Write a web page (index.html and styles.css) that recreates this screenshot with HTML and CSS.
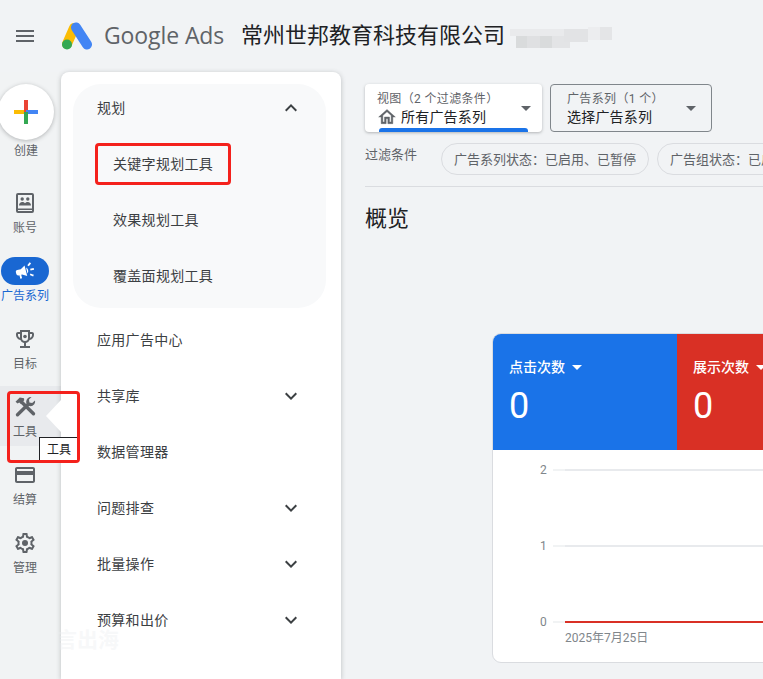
FILE: index.html
```html
<!DOCTYPE html>
<html lang="zh">
<head>
<meta charset="utf-8">
<title>Google Ads</title>
<link rel="stylesheet" href="styles.css">
</head>
<body>
<div class="app">
  <header class="topbar">
    <svg class="menu-icon" viewBox="0 0 24 24"><path d="M3 18h18v-2H3v2zm0-5h18v-2H3v2zm0-7v2h18V6H3z"/></svg>
    <svg class="logo" viewBox="0 0 32 28">
      <line x1="13" y1="6" x2="6" y2="22" stroke="#fbbc04" stroke-width="10" stroke-linecap="round"/>
      <line x1="15" y1="5.500" x2="26" y2="22.500" stroke="#4285f4" stroke-width="10" stroke-linecap="round"/>
      <circle cx="6" cy="22.500" r="5" fill="#34a853"/>
    </svg>
    <span class="brand">Google Ads</span>
    <span class="company">常州世邦教育科技有限公司</span>
    <span class="blur-patch"><i class="b1"></i><i class="b2"></i><i class="b3"></i><i class="b4"></i><i class="b5"></i><i class="b6"></i><i class="b7"></i><i class="b8"></i></span>
  </header>
  <div class="body">
    <aside class="rail">
      <div class="create">
        <div class="fab">
          <svg viewBox="0 0 24 24" class="plus">
            <rect x="0" y="10" width="12" height="4" fill="#fbbc04"/>
            <rect x="10" y="0" width="4" height="12" fill="#ea4335"/>
            <rect x="12" y="10" width="12" height="4" fill="#4285f4"/>
            <rect x="10" y="12" width="4" height="12" fill="#34a853"/>
          </svg>
        </div>
        <span class="rail-label">创建</span>
      </div>
      <div class="rail-item">
        <svg class="rail-icon" viewBox="0 0 24 24"><path fill-rule="evenodd" d="M5 2h14a2 2 0 0 1 2 2v16a2 2 0 0 1-2 2H5a2 2 0 0 1-2-2V4a2 2 0 0 1 2-2zm0 2v13.500h14V4H5zm0 15v1h14v-1H5z"/><circle cx="9.200" cy="8" r="1.700"/><circle cx="14.800" cy="8" r="1.700"/><path d="M6 14.500c0-2.300 1.500-3.500 3.200-3.500 1.200 0 2.100.5 2.800 1.200.7-.7 1.600-1.200 2.800-1.200 1.700 0 3.200 1.200 3.200 3.500H6z"/></svg>
        <span class="rail-label">账号</span>
      </div>
      <div class="rail-item active">
        <div class="pill">
          <svg viewBox="0 0 24 24"><path d="M18 11v2h4v-2h-4zm-2 6.610c.96.710 2.210 1.650 3.200 2.390.4-.53.8-1.070 1.200-1.600-.99-.74-2.240-1.680-3.200-2.400-.4.54-.8 1.080-1.200 1.610zM20.400 5.600c-.4-.53-.8-1.070-1.200-1.600-.99.74-2.240 1.680-3.200 2.400.4.53.8 1.070 1.200 1.600.96-.72 2.210-1.650 3.200-2.400zM4 9c-1.100 0-2 .9-2 2v2c0 1.100.9 2 2 2h1v4h2v-4h1l5 3V6L8 9H4zm11.500 3c0-1.330-.58-2.530-1.500-3.350v6.690c.92-.81 1.500-2.010 1.500-3.340z"/></svg>
        </div>
        <span class="rail-label">广告系列</span>
      </div>
      <div class="rail-item">
        <svg class="rail-icon" viewBox="0 0 24 24"><path fill-rule="evenodd" d="M19 5h-2V3H7v2H5c-1.100 0-2 .9-2 2v1c0 2.550 1.920 4.630 4.390 4.940.63 1.500 1.980 2.630 3.610 2.960V19H7v2h10v-2h-4v-3.100c1.630-.33 2.980-1.460 3.610-2.960C19.080 12.630 21 10.550 21 8V7c0-1.100-.9-2-2-2zM5 8V7h2v3.820C5.840 10.400 5 9.300 5 8zm14 0c0 1.300-.84 2.400-2 2.820V7h2v1zM9 5h6v6a3 3 0 0 1-6 0V5z"/><circle cx="12" cy="9.500" r="1.800"/></svg>
        <span class="rail-label">目标</span>
      </div>
      <div class="rail-item hovered">
        <svg class="rail-icon" viewBox="0 0 24 24"><path d="M2.500 6.800L6.800 2.600l4.200.6.2 2-3.200 3.800-1.800-1.600-1.600 1.200z"/><line class="tool-line" x1="8.800" y1="7.200" x2="20.500" y2="18.800"/><path d="M18.500 2L16 4.600l.4 2.800 2.800.6L22 5.600c.6 3-1.600 5.600-4.400 5.600-2.600 0-4.600-2.200-4.400-4.600.2-2.800 2.800-5 5.300-4.600z"/><line class="tool-line" x1="4.500" y1="19.800" x2="15" y2="9.500"/></svg>
        <span class="rail-label">工具</span>
      </div>
      <div class="rail-item">
        <svg class="rail-icon" viewBox="0 0 24 24"><path d="M20 4H4c-1.110 0-1.990.89-1.990 2L2 18c0 1.110.89 2 2 2h16c1.110 0 2-.89 2-2V6c0-1.110-.89-2-2-2zm0 14H4v-6h16v6zm0-10H4V6h16v2z"/></svg>
        <span class="rail-label">结算</span>
      </div>
      <div class="rail-item">
        <svg class="rail-icon" viewBox="0 0 24 24"><path d="M19.430 12.980c.04-.32.070-.64.070-.98 0-.34-.03-.66-.07-.98l2.110-1.650c.19-.15.240-.42.120-.64l-2-3.460c-.09-.16-.26-.25-.44-.25-.06 0-.12.010-.17.030l-2.490 1c-.52-.4-1.080-.73-1.690-.98l-.38-2.650C14.460 2.180 14.250 2 14 2h-4c-.25 0-.46.180-.49.420l-.38 2.650c-.61.250-1.170.590-1.690.980l-2.490-1c-.06-.02-.12-.03-.18-.03-.17 0-.34.090-.43.250l-2 3.460c-.13.220-.07.490.12.640l2.110 1.650c-.04.320-.07.650-.07.980 0 .33.030.66.070.98l-2.110 1.650c-.19.150-.24.420-.12.640l2 3.460c.09.160.26.250.44.250.06 0 .12-.01.17-.03l2.490-1c.52.4 1.080.73 1.690.98l.38 2.650c.03.240.24.420.49.420h4c.25 0 .46-.18.49-.42l.38-2.650c.61-.25 1.170-.59 1.690-.98l2.490 1c.06.02.12.03.18.03.17 0 .34-.09.43-.25l2-3.460c.12-.22.07-.49-.12-.64l-2.110-1.650zm-1.980-1.710c.04.310.05.520.05.730 0 .210-.02.430-.05.730l-.14 1.130.89.7 1.080.84-.7 1.210-1.270-.51-1.040-.42-.9.680c-.43.320-.84.560-1.250.730l-1.060.43-.16 1.130-.2 1.350h-1.400l-.19-1.350-.16-1.130-1.060-.43c-.43-.18-.83-.41-1.230-.71l-.91-.7-1.060.43-1.270.51-.7-1.210 1.080-.84.89-.7-.14-1.130c-.03-.31-.05-.54-.05-.74s.02-.43.050-.73l.14-1.130-.89-.7-1.080-.84.7-1.210 1.270.51 1.040.42.9-.68c.43-.32.84-.56 1.250-.73l1.060-.43.16-1.130.2-1.350h1.390l.19 1.350.16 1.130 1.060.43c.43.180.83.410 1.230.710l.91.7 1.060-.43 1.270-.51.7 1.210-1.070.85-.89.7.14 1.130z"/><circle cx="12" cy="12" r="3"/></svg>
        <span class="rail-label">管理</span>
      </div>
    </aside>

    <nav class="panel">
      <div class="group">
        <div class="nav-row"><span>规划</span><svg class="chev" viewBox="0 0 24 24"><path d="M12 8l-6 6 1.410 1.410L12 10.830l4.590 4.580L18 14z"/></svg></div>
        <div class="nav-row sub"><span>关键字规划工具</span></div>
        <div class="nav-row sub"><span>效果规划工具</span></div>
        <div class="nav-row sub"><span>覆盖面规划工具</span></div>
      </div>
      <div class="nav-list">
        <div class="nav-row tall"><span>应用广告中心</span></div>
        <div class="nav-row tall"><span>共享库</span><svg class="chev" viewBox="0 0 24 24"><path d="M16.590 8.590L12 13.170 7.410 8.590 6 10l6 6 6-6z"/></svg></div>
        <div class="nav-row tall"><span>数据管理器</span></div>
        <div class="nav-row tall"><span>问题排查</span><svg class="chev" viewBox="0 0 24 24"><path d="M16.590 8.590L12 13.170 7.410 8.590 6 10l6 6 6-6z"/></svg></div>
        <div class="nav-row tall"><span>批量操作</span><svg class="chev" viewBox="0 0 24 24"><path d="M16.590 8.590L12 13.170 7.410 8.590 6 10l6 6 6-6z"/></svg></div>
        <div class="nav-row tall"><span>预算和出价</span><svg class="chev" viewBox="0 0 24 24"><path d="M16.590 8.590L12 13.170 7.410 8.590 6 10l6 6 6-6z"/></svg></div>
      </div>
    </nav>

    <main class="main">
      <div class="selectors">
        <div class="selector view">
          <div class="sel-text">
            <span class="sel-label">视图（2 个过滤条件）</span>
            <span class="sel-value"><svg class="home" viewBox="0 0 24 24"><path d="M12 5.690l5 4.500V18h-2v-6H9v6H7v-7.810l5-4.500M12 3L2 12h3v8h6v-6h2v6h6v-8h3L12 3z"/></svg>所有广告系列</span>
          </div>
          <i class="caret"></i>
          <i class="sel-bar"></i>
        </div>
        <div class="selector campaign">
          <div class="sel-text">
            <span class="sel-label">广告系列（1 个）</span>
            <span class="sel-value">选择广告系列</span>
          </div>
          <i class="caret"></i>
        </div>
      </div>
      <div class="filters">
        <span class="filter-title">过滤条件</span>
        <span class="chip">广告系列状态：已启用、已暂停</span>
        <span class="chip">广告组状态：已启用、已暂停</span>
      </div>
      <div class="divider"></div>
      <h1 class="title">概览</h1>
      <section class="card">
        <div class="tiles">
          <div class="tile blue"><div class="tile-label">点击次数<i class="caret white"></i></div><div class="tile-num">0</div></div>
          <div class="tile red"><div class="tile-label">展示次数<i class="caret white"></i></div><div class="tile-num">0</div></div>
        </div>
        <div class="chart">
          <div class="chart-row"><span class="y">2</span><i class="tick"></i><i class="grid"></i></div>
          <div class="chart-row"><span class="y">1</span><i class="tick"></i><i class="grid"></i></div>
          <div class="chart-row"><span class="y">0</span><i class="tick"></i><i class="grid zero"></i></div>
          <div class="date">2025年7月25日</div>
        </div>
      </section>
    </main>
  </div>

  <div class="mark mark-keyword"></div>
  <div class="mark mark-tools"></div>
  <div class="arrow"></div>
  <div class="tooltip">工具</div>
  <div class="watermark">言出海</div>
</div>
</body>
</html>
```
FILE: styles.css
```css
* { box-sizing: border-box; }
html, body { margin: 0; height: 100%; }
body {
  font-family: Roboto, "Noto Sans CJK SC", sans-serif;
  background: #f1f3f4;
  color: #3c4043;
  overflow: hidden;
}
.app { position: relative; width: 763px; height: 679px; overflow: hidden; background: #f1f3f5; }

/* header */
.topbar { height: 72px; display: flex; align-items: center; }
.menu-icon { width: 24px; height: 24px; margin-left: 13px; fill: #5f6368; flex: none; }
.logo { width: 32px; height: 28px; margin-left: 24px; flex: none; }
.brand { margin: 0 0 2px 11px; width: 137px; font-family: "Open Sans", Roboto, sans-serif; font-size: 23px; letter-spacing: -.1px; color: #5f6368; flex: none; white-space: nowrap; }
.company { font-size: 22px; line-height: 28px; color: #202124; white-space: nowrap; flex: none; }

/* mosaic covering a blurred part of the account name */
.blur-patch { position: relative; display: block; width: 0; height: 0; align-self: flex-start; }
.blur-patch i { position: absolute; display: block; }
.b1 { left: 5px; top: 29px; width: 55px; height: 7px; background: #e9eaec; }
.b2 { left: 11px; top: 36px; width: 11px; height: 12px; background: #d9dbdc; }
.b3 { left: 22px; top: 36px; width: 13px; height: 12px; background: #dfe0e2; }
.b4 { left: 35px; top: 36px; width: 12px; height: 12px; background: #d9dbdc; }
.b5 { left: 47px; top: 36px; width: 18px; height: 12px; background: #e3e4e6; }
.b6 { left: 59px; top: 29px; width: 24px; height: 13px; background: #e2e3e5; }
.b7 { left: 83px; top: 27px; width: 12px; height: 13px; background: #ecedef; }
.b8 { left: 95px; top: 27px; width: 12px; height: 13px; background: #e4e5e7; }

.body { display: flex; height: 607px; }

/* rail */
.rail { width: 61px; flex: none; padding-top: 12px; display: flex; flex-direction: column; gap: 8px; background: #f1f3f4; }
.create { height: 90px; display: flex; flex-direction: column; }
.fab { width: 56px; height: 56px; margin-left: -2px; border-radius: 50%; background: #fff; box-shadow: 0 1px 4px rgba(60,64,67,.35); display: flex; align-items: center; justify-content: center; flex: none; }
.plus { width: 24px; height: 24px; }
.create .rail-label { margin-top: 3px; width: 52px; }
.rail-item { height: 60px; padding: 9px 11px 0 0; display: flex; flex-direction: column; align-items: center; gap: 5px; }
.rail-item.hovered { background: #e8eaed; }
.rail-icon { width: 24px; height: 24px; fill: #5f6368; flex: none; }
.tool-line { stroke: #5f6368; stroke-width: 3.4; stroke-linecap: round; }
.rail-label { display: block; font-size: 12px; line-height: 16px; color: #5f6368; text-align: center; white-space: nowrap; }
.pill { width: 48px; height: 28px; margin: -2px 0; border-radius: 14px; background: #1967d2; display: flex; align-items: center; justify-content: center; flex: none; }
.pill svg { width: 22px; height: 22px; fill: #fff; transform: rotate(-14deg); }
.active .rail-label { color: #1967d2; }

/* panel */
.panel { width: 280px; flex: none; background: #fff; border-radius: 8px 8px 0 0; box-shadow: 0 1px 5px rgba(60,64,67,.3); padding: 12px 15px 0 12px; position: relative; }
.group { background: #f8f9fa; border-radius: 28px; padding-bottom: 4px; }
.nav-row { display: flex; align-items: center; justify-content: space-between; height: 48px; margin-bottom: 4px; padding: 0 23px 0 24px; font-size: 14px; letter-spacing: .3px; color: #3c4043; }
.nav-row span { margin-bottom: 2px; }
.nav-row.sub { height: 56px; margin: 0; padding-left: 40px; }
.nav-list { padding-top: 4px; }
.nav-row.tall { height: 56px; margin: 0; }
.chev { width: 24px; height: 24px; fill: #3c4043; flex: none; }

/* main */
.main { flex: 1; min-width: 0; padding: 12px 0 0 24px; overflow: hidden; }
.selectors { display: flex; gap: 8px; }
.selector { position: relative; height: 48px; border-radius: 4px; display: flex; align-items: center; justify-content: space-between; flex: none; }
.selector.view { width: 177px; background: #fff; box-shadow: 0 1px 3px rgba(60,64,67,.35); padding: 0 11px 0 12px; }
.selector.campaign { width: 162px; border: 1px solid #80868b; padding: 0 15px 0 16px; }
.sel-text { display: flex; flex-direction: column; padding-top: 2px; }
.sel-label { font-size: 12px; line-height: 16px; letter-spacing: .35px; color: #5f6368; white-space: nowrap; }
.sel-value { display: flex; align-items: center; font-size: 14px; line-height: 20px; letter-spacing: .2px; color: #202124; white-space: nowrap; }
.home { width: 20px; height: 20px; fill: #5f6368; stroke: #5f6368; stroke-width: .5; margin: 0 4px 0 0; }
.caret { display: inline-block; width: 0; height: 0; border-left: 5px solid transparent; border-right: 5px solid transparent; border-top: 5px solid #5f6368; flex: none; }
.caret.white { border-top-color: #fff; margin-left: 7px; vertical-align: 2px; }
.sel-bar { position: absolute; left: 14px; bottom: 0; width: 149px; height: 4px; background: #1a73e8; border-radius: 3px 3px 0 0; }

.filters { display: flex; align-items: flex-start; margin-top: 11px; white-space: nowrap; }
.filter-title { width: 76px; flex: none; font-size: 13px; line-height: 24px; color: #5f6368; }
.chip { flex: none; height: 32px; margin-right: 8px; padding: 0 12px; border: 1px solid #dadce0; border-radius: 16px; font-size: 13px; line-height: 32px; color: #5f6368; }
.divider { height: 1px; margin-top: 11px; background: #dadce0; }
.title { margin: 18px 0 0; font-size: 22px; line-height: 28px; font-weight: 400; color: #202124; }

.card { width: 400px; height: 330px; margin: 100px 0 0 127px; background: #fff; border: 1px solid #dadce0; border-radius: 9px; overflow: hidden; }
.tiles { display: flex; height: 116px; }
.tile { width: 184px; flex: none; padding: 23px 16px 0; color: #fff; }
.tile.blue { background: #1a73e8; }
.tile.red { background: #d93025; }
.tile-label { font-size: 14px; line-height: 20px; font-weight: 500; white-space: nowrap; }
.tile-num { margin-top: 5px; font-size: 36px; line-height: 48px; }
.chart { padding-top: 12px; }
.chart-row { display: flex; align-items: center; height: 16px; margin-bottom: 60px; }
.chart-row:nth-child(3) { margin-bottom: 0; }
.y { width: 54px; padding-left: 47px; flex: none; font-size: 12px; color: #80868b; }
.tick { width: 12px; height: 2px; margin-left: 6px; background: #f1f3f4; flex: none; }
.grid { flex: 1; height: 2px; background: #e8eaed; }
.grid.zero { background: #d93025; }
.date { padding-left: 72px; font-size: 12px; line-height: 16px; color: #80868b; }

/* annotations */
.mark { position: absolute; border: 3px solid #f4211c; border-radius: 4px; pointer-events: none; }
.mark-keyword { left: 95px; top: 143px; width: 136px; height: 42px; }
.mark-tools { left: 7px; top: 391px; width: 73px; height: 72px; }
.arrow { position: absolute; left: 46px; top: 400px; width: 15px; height: 32px; background: #fff; clip-path: polygon(100% 0, 100% 100%, 0 50%); }
.tooltip { position: absolute; left: 39px; top: 437px; width: 38px; height: 23px; background: #fff; border: 1px solid #202124; border-width: 1px 0 0 1px; font-size: 12px; line-height: 24px; padding-left: 7px; color: #202124; white-space: nowrap; }
.watermark { position: absolute; left: 56px; top: 626px; font-size: 21px; line-height: 28px; font-weight: 700; color: rgba(236,238,240,.4); white-space: nowrap; }
```
